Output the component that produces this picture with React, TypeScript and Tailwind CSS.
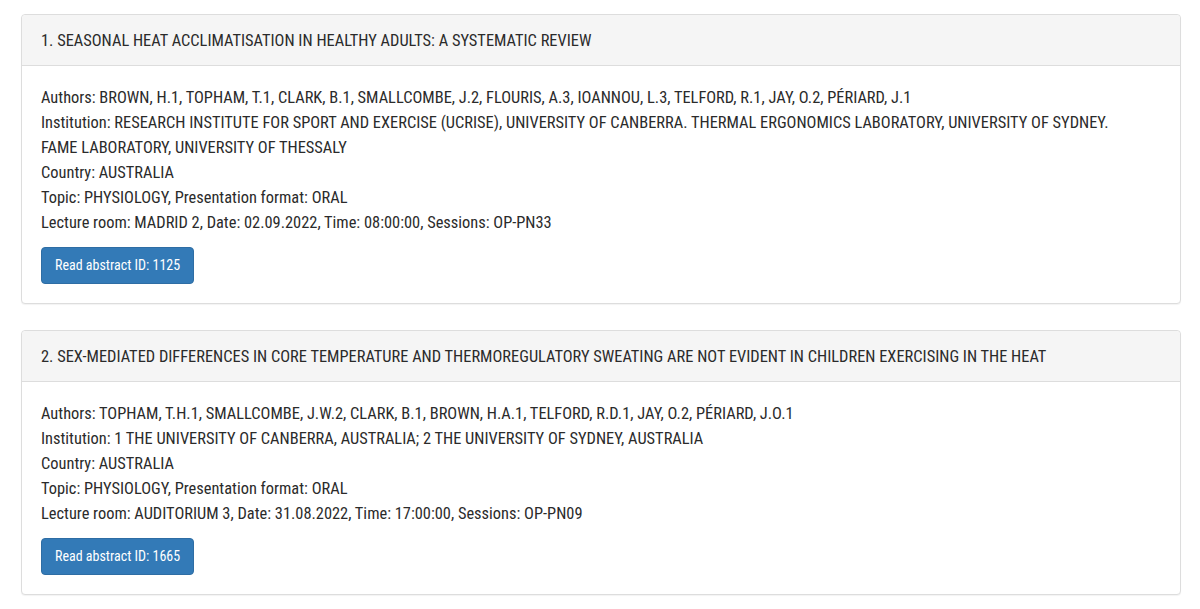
type Abstract = {
  title: string;
  authors: string;
  institution: string[];
  country: string;
  topic: string;
  format: string;
  room: string;
  date: string;
  time: string;
  session: string;
  id: string;
};

const abstracts: Abstract[] = [
  {
    title: "1. SEASONAL HEAT ACCLIMATISATION IN HEALTHY ADULTS: A SYSTEMATIC REVIEW",
    authors:
      "BROWN, H.1, TOPHAM, T.1, CLARK, B.1, SMALLCOMBE, J.2, FLOURIS, A.3, IOANNOU, L.3, TELFORD, R.1, JAY, O.2, PÉRIARD, J.1",
    institution: [
      "RESEARCH INSTITUTE FOR SPORT AND EXERCISE (UCRISE), UNIVERSITY OF CANBERRA. THERMAL ERGONOMICS LABORATORY, UNIVERSITY OF SYDNEY.",
      "FAME LABORATORY, UNIVERSITY OF THESSALY",
    ],
    country: "AUSTRALIA",
    topic: "PHYSIOLOGY",
    format: "ORAL",
    room: "MADRID 2",
    date: "02.09.2022",
    time: "08:00:00",
    session: "OP-PN33",
    id: "1125",
  },
  {
    title:
      "2. SEX-MEDIATED DIFFERENCES IN CORE TEMPERATURE AND THERMOREGULATORY SWEATING ARE NOT EVIDENT IN CHILDREN EXERCISING IN THE HEAT",
    authors:
      "TOPHAM, T.H.1, SMALLCOMBE, J.W.2, CLARK, B.1, BROWN, H.A.1, TELFORD, R.D.1, JAY, O.2, PÉRIARD, J.O.1",
    institution: ["1 THE UNIVERSITY OF CANBERRA, AUSTRALIA; 2 THE UNIVERSITY OF SYDNEY, AUSTRALIA"],
    country: "AUSTRALIA",
    topic: "PHYSIOLOGY",
    format: "ORAL",
    room: "AUDITORIUM 3",
    date: "31.08.2022",
    time: "17:00:00",
    session: "OP-PN09",
    id: "1665",
  },
];

function AbstractCard({ a }: { a: Abstract }) {
  return (
    <div className="rounded-[4px] border border-[#dddddd] bg-white shadow-[0_1px_1px_rgba(0,0,0,0.05)]">
      {/* heading */}
      <div className="flex h-[51px] items-center rounded-t-[4px] border-b border-[#dddddd] bg-[#f5f5f5] px-[19px]">
        <h3 className="whitespace-nowrap">{a.title}</h3>
      </div>
      {/* body */}
      <div className="px-[19px] pt-[19px] pb-[19px]">
        <div>Authors: {a.authors}</div>
        <div>
          Institution:{" "}
          {a.institution.map((line, i) => (
            <span key={i}>
              {i > 0 && <br />}
              {line}
            </span>
          ))}
        </div>
        <div>Country: {a.country}</div>
        <div>
          Topic: {a.topic}, Presentation format: {a.format}
        </div>
        <div>
          Lecture room: {a.room}, Date: {a.date}, Time: {a.time}, Sessions: {a.session}
        </div>
        <button className="mt-3 flex h-[37px] items-center rounded-[4px] border border-[#2e6da4] bg-[#337ab7] px-[13px] text-[14px] font-normal text-white">
          Read abstract ID: {a.id}
        </button>
      </div>
    </div>
  );
}

export default function App() {
  return (
    <div className="min-h-[609px] bg-white pl-[21px] pr-[19px] pt-[14px] font-['Roboto_Condensed',sans-serif] text-[16.4px] leading-[25px] text-[#2b2b2b]">
      <div className="flex flex-col gap-[26px]">
        {abstracts.map((a) => (
          <AbstractCard key={a.id} a={a} />
        ))}
      </div>
    </div>
  );
}
